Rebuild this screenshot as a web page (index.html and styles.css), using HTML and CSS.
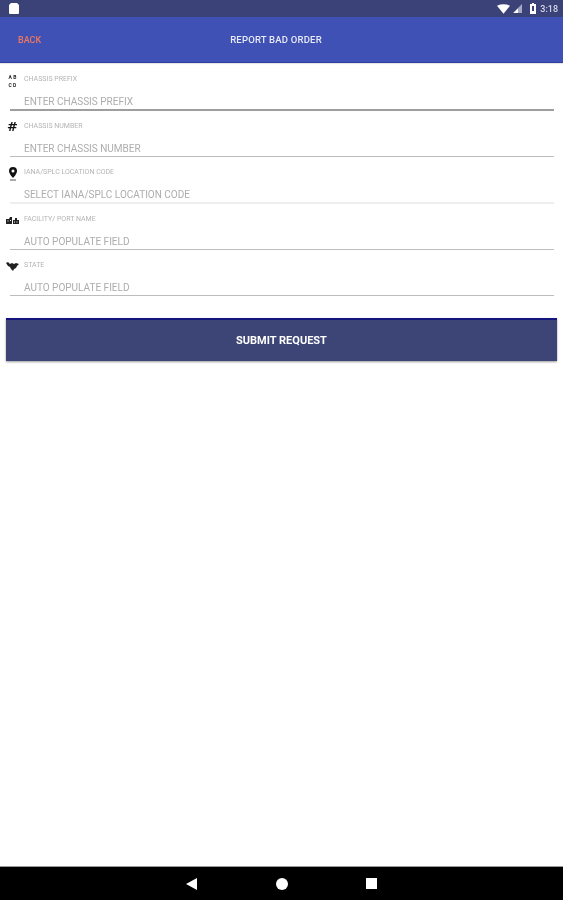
FILE: index.html
```html
<!DOCTYPE html>
<html lang="en">
  <head>
    <meta charset="UTF-8" />
    <meta name="viewport" content="width=device-width, initial-scale=1.0" />
    <title>Report Bad Order</title>
    <link rel="stylesheet" href="styles.css">
  </head>
  <body>
    <div class="status-bar">
      <svg class="notif-icon" width="10" height="11" viewBox="0 0 10 11">
        <path d="M2 0h6l2 2v8a1 1 0 0 1-1 1H1a1 1 0 0 1-1-1V2z" fill="#fff" />
      </svg>
      <div class="status-right">
        <svg width="13" height="10" viewBox="0 0 14 10">
          <path d="M0 1.500Q7-1.500 14 1.500L7 10z" fill="#fff" />
        </svg>
        <svg width="9" height="9" viewBox="0 0 9 9">
          <path d="M9 0v9H0z" fill="#fff" opacity="0.55" />
          <path d="M5 4.500V9H0.500z" fill="#fff" />
        </svg>
        <svg class="battery" width="6" height="11" viewBox="0 0 6 11">
          <path d="M2 0h2v1h2v10H0V1h2z" fill="#fff" />
          <path d="M2 3h2v5H2z" fill="#3a4278" />
        </svg>
        <span class="clock">3:18</span>
      </div>
    </div>

    <header class="top-bar">
      <a class="back" href="#">BACK</a>
      <h1 class="title">REPORT BAD ORDER</h1>
    </header>

    <form class="order-form">
      <div class="field field-first">
        <div class="field-icon icon-ab">A B<br />C D</div>
        <div class="field-body">
          <label>CHASSIS PREFIX</label>
          <div class="value">ENTER CHASSIS PREFIX</div>
        </div>
      </div>
      <div class="field field-high">
        <div class="field-icon icon-hash">#</div>
        <div class="field-body">
          <label>CHASSIS NUMBER</label>
          <div class="value">ENTER CHASSIS NUMBER</div>
        </div>
      </div>
      <div class="field field-high field-faint">
        <div class="field-icon icon-pin">
          <svg width="10" height="14" viewBox="0 0 10 14">
            <path d="M5 0a4 4 0 0 1 4 4c0 3-4 7-4 7S1 7 1 4a4 4 0 0 1 4-4zm0 2.500a1.500 1.500 0 1 0 0 3 1.500 1.500 0 0 0 0-3z" fill="#111" fill-rule="evenodd" />
            <path d="M2 12.500h6v1H2z" fill="#555" />
          </svg>
        </div>
        <div class="field-body">
          <label>IANA/SPLC LOCATION CODE</label>
          <div class="value">SELECT IANA/SPLC LOCATION CODE</div>
        </div>
      </div>
      <div class="field">
        <div class="field-icon icon-port">
          <svg width="13" height="8" viewBox="0 0 13 8">
            <path d="M0 2h3l1-2h2v7H0zM7 3h2V1h2v2h2v4H7z" fill="#222" />
            <path d="M1.500 3.500h1v1h-1zM4 3h1v1H4zM8 4.500h1v1H8zM10.500 4.500h1v1h-1z" fill="#fff" />
          </svg>
        </div>
        <div class="field-body">
          <label>FACILITY/ PORT NAME</label>
          <div class="value">AUTO POPULATE FIELD</div>
        </div>
      </div>
      <div class="field">
        <div class="field-icon icon-state">
          <svg width="13" height="9" viewBox="0 0 13 9">
            <path d="M0 1l2-1 2 2 2-1 2 1 2-1 3 1-2 2-1 2-2 1-1 2-2-2-1-2-2-1z" fill="#222" />
          </svg>
        </div>
        <div class="field-body">
          <label>STATE</label>
          <div class="value">AUTO POPULATE FIELD</div>
        </div>
      </div>
      <button class="submit" type="button">SUBMIT REQUEST</button>
    </form>

    <div class="spacer"></div>

    <div class="nav-bar">
      <svg width="11" height="12" viewBox="0 0 11 12"><path d="M11 0v12L0 6z" fill="#fff" /></svg>
      <svg width="12" height="12" viewBox="0 0 12 12"><circle cx="6" cy="6" r="6" fill="#fff" /></svg>
      <svg width="11" height="11" viewBox="0 0 11 11"><path d="M0 0h11v11H0z" fill="#fff" /></svg>
    </div>
  </body>
</html>
```

FILE: styles.css
```css
* {
  box-sizing: border-box;
}

/* the reference is a soft, upscaled capture */
body {
  font-family: "Roboto", sans-serif;
  margin: 0;
  padding: 0;
  height: 900px;
  display: flex;
  flex-direction: column;
  background-color: #fff;
  overflow: hidden;
  filter: blur(0.45px);
}

.status-bar {
  height: 17px;
  background-color: #3a4278;
  display: flex;
  align-items: center;
  justify-content: space-between;
  padding: 0 5px 0 9px;
}

.status-right {
  display: flex;
  align-items: center;
  gap: 3px;
}

.battery {
  margin-left: 5px;
}

.clock {
  color: #d6d9ea;
  font-size: 9px;
  font-weight: 500;
  margin-left: 1px;
}

.top-bar {
  height: 46px;
  background-color: #3f51b5;
  border-bottom: 1px solid #2f3fa8;
  box-shadow: 0 1px 1px rgba(0, 0, 0, 0.1);
  display: flex;
  align-items: center;
  justify-content: center;
  padding-right: 11px;
  position: relative;
}

.back {
  position: absolute;
  left: 18px;
  top: 18px;
  color: #f0775f;
  font-size: 9px;
  font-weight: 500;
  text-decoration: none;
}

.title {
  margin: 0;
  color: #e8eaf6;
  font-size: 9.5px;
  font-weight: 500;
  letter-spacing: 0.2px;
}

.order-form {
  padding: 0 6px;
}

.field {
  height: 46.25px;
  margin-right: 3px;
  display: flex;
}

.field-first {
  height: 48px;
}

.field-first .field-body {
  border-bottom: 2px solid #9e9e9e;
}

.field-icon {
  width: 13px;
  flex: none;
  display: flex;
  justify-content: center;
  align-items: flex-start;
  color: #222;
}

.icon-ab {
  display: block;
  padding-top: 10px;
  font-size: 5px;
  font-weight: 700;
  line-height: 8px;
  text-align: center;
}

.icon-hash {
  padding-top: 9px;
  font-family: "DejaVu Sans", sans-serif;
  font-size: 13px;
  font-weight: 700;
  line-height: 14px;
  color: #111;
}

.icon-pin {
  padding-top: 9.5px;
}

.icon-port {
  padding-top: 13.5px;
}

.icon-state {
  padding-top: 12px;
}

.field-body {
  flex: 1;
  margin-left: -9px;
  padding-left: 14px;
  padding-top: 11.5px;
  border-bottom: 1px solid #bdbdbd;
}

.field-high .field-body {
  padding-top: 10.5px;
}

.field-faint .field-body {
  border-bottom: 2px solid #eeeeee;
}

.field-body label {
  display: block;
  color: #b4b4b4;
  font-size: 7px;
  line-height: 8px;
}

.value {
  color: #adadad;
  font-size: 10px;
  line-height: 12px;
  margin-top: 13px;
}

.submit {
  display: block;
  width: 100%;
  height: 43px;
  margin-top: 22px;
  background-color: #3d4577;
  color: #fff;
  border: none;
  border-top: 2px solid #15157e;
  box-shadow: 0 1px 2px rgba(0, 0, 0, 0.4);
  font-family: "Roboto", sans-serif;
  font-size: 11px;
  font-weight: 700;
}

.spacer {
  flex: 1;
}

.nav-bar {
  height: 34px;
  background-color: #000;
  border-top: 1px solid #999;
  display: flex;
  align-items: center;
  justify-content: center;
  gap: 78.5px;
}
```
